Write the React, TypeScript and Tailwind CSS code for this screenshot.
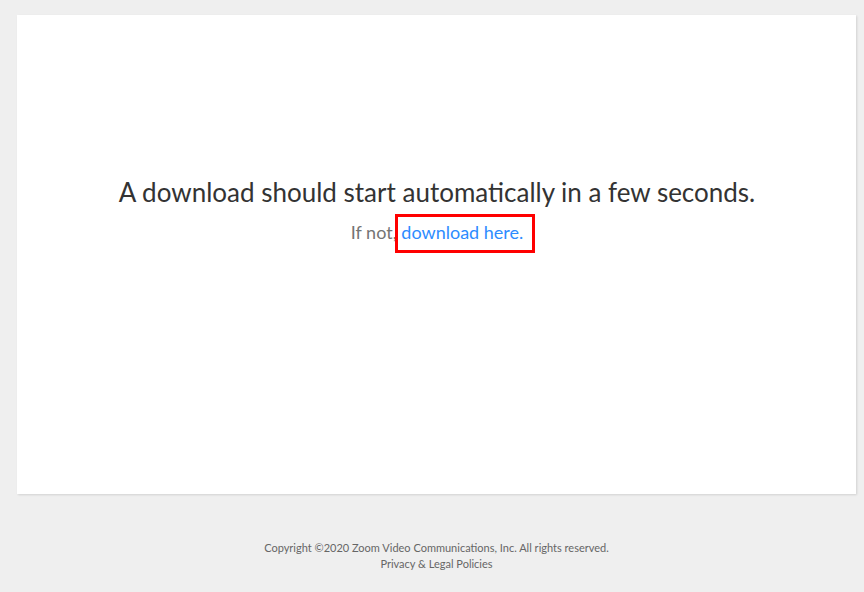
export default function App() {
  return (
    <div className="min-h-[592px] bg-[#efefef] pt-[15px] font-['Lato','Liberation_Sans',sans-serif]">
      {/* main card */}
      <div className="ml-[17px] h-[479px] w-[839px] bg-white pt-[162px] pl-[1px] text-center shadow-[1px_1px_2px_rgba(0,0,0,0.12)]">
        <h1 className="text-[26px] leading-[1.2] text-[#333333]">
          A download should start automatically in a few seconds.
        </h1>
        <p className="mt-[14px] text-[18px] leading-[1.2] text-[#747474]">
          If not,{" "}
          <span className="relative">
            <a href="#" className="text-[#2d8cff]">
              download here.
            </a>
            {/* highlight box */}
            <span className="pointer-events-none absolute -top-[7px] -bottom-[10px] -left-[6px] -right-[12px] border-[3px] border-[#ff0000]" />
          </span>
        </p>
      </div>

      {/* footer */}
      <footer className="mt-[46px] w-[873px] text-center text-[11px] leading-[16px] text-[#666666]">
        <div>Copyright ©2020 Zoom Video Communications, Inc. All rights reserved.</div>
        <div>Privacy &amp; Legal Policies</div>
      </footer>
    </div>
  );
}
